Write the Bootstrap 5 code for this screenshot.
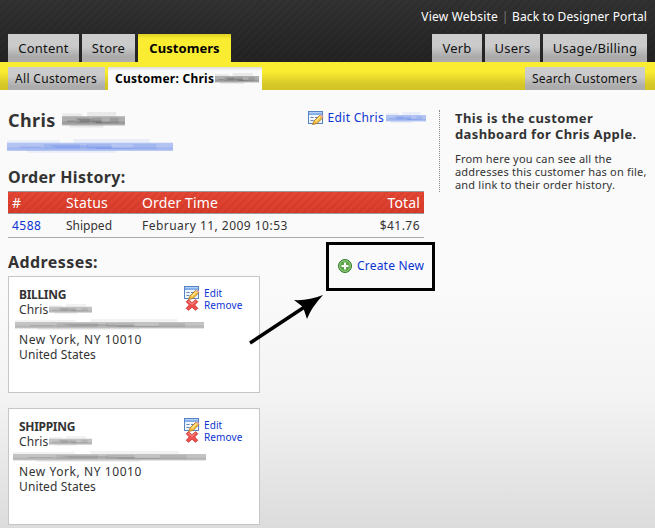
<!DOCTYPE html>
<html lang="en">
<head>
<meta charset="utf-8">
<meta name="viewport" content="width=device-width, initial-scale=1">
<title>Customer dashboard</title>
<link href="https://cdn.jsdelivr.net/npm/bootstrap@5.3.0/dist/css/bootstrap.min.css" rel="stylesheet">
<style>
body{font-family:"Noto Sans","Open Sans",sans-serif;font-size:12px;line-height:15px;color:#333;height:528px;overflow:hidden;letter-spacing:.12px;
 background:linear-gradient(#fafafa 0,#fafafa 290px,#f3f3f3 400px,#dcdcdc 528px)}
a{color:#0b35d2;text-decoration:none}
h1,h2,h3{font-weight:700;color:#333;margin:0}
.masthead{height:62px;padding:0 8px;background:repeating-linear-gradient(135deg,rgba(0,0,0,.1) 0,rgba(0,0,0,.02) 2px 3.600px,rgba(0,0,0,.1) 5.600px),linear-gradient(#333,#242424)}
.toplinks{height:34px;padding-bottom:2px;color:#777}
.toplinks a{color:#fff}
.toplinks #view{letter-spacing:.2px}
.sep{width:14px;text-align:center}
.tab{height:28px;font-size:13px;color:#111;background:linear-gradient(#cdcdcd 0,#cacaca 45%,#ababab 80%,#acacac);display:flex;align-items:center;justify-content:center;white-space:nowrap;letter-spacing:.25px}
.tab.current{background:linear-gradient(#ded021,#faec31 5px);font-weight:700;color:#000;letter-spacing:.05px}
.subbar{height:28px;padding:5px 10px 0 8px;background:linear-gradient(#faec31 0,#faec31 35%,#d5c727 80%,#d3c526)}
.subtab{height:23px;font-size:12px;color:#111;background:linear-gradient(#cdcdcd 0,#cacaca 40%,#acacac 85%);display:flex;align-items:center;white-space:nowrap;padding:0 7px;letter-spacing:.2px}
.subtab.w-all{letter-spacing:.32px}
.subtab.current{background:linear-gradient(#ddd,#fafafa 4px);font-weight:700;color:#000;letter-spacing:.25px}
.g3{gap:3px}
.w-content{width:71px}.w-store{width:53px}.w-cust{width:93px}.w-verb{width:50px}.w-users{width:55px}.w-usage{width:104px}
.w-all{width:97px}.w-one{width:154px}.w-search{width:120px}
.main{width:416px;margin-left:8px}
.title{font-size:18px;line-height:24px;letter-spacing:.4px;padding-top:2px}
.section{font-size:16px;line-height:20px;letter-spacing:.3px}
.mailrow{margin-top:7px}
.history-title{margin-top:13px}
.addr-title{margin-top:14px;letter-spacing:.42px}
.orders{table-layout:fixed;width:416px;margin:4px 0 0;border-collapse:separate;border-spacing:0}
.orders th{height:23px;padding:0 4px;font-size:14px;line-height:20px;font-weight:400;color:#fff;border-top:1px solid #999;border-bottom:1px solid #999}
.orders thead{background:repeating-linear-gradient(135deg,rgba(120,20,10,.13) 0,transparent 2px 3.600px,rgba(120,20,10,.13) 5.600px),linear-gradient(#e64735,#d93c2b)}
.orders td{height:24px;padding:0 4px;border-bottom:1px solid #aaa;letter-spacing:.47px}
.orders td.plain{letter-spacing:0}
.addrhead{height:38px}
.editlink{padding-top:4px;letter-spacing:.3px;margin-right:-2px}
.addr{width:252px;height:117px;border:1px solid #c6c6c6;background:#fff;padding:10px 10px 0;position:relative}
.addr + .addr{margin-top:15px}
.addr strong{letter-spacing:-.3px}
.zip{letter-spacing:.57px}
.line{height:15px}
.acts{position:absolute;left:175px;top:10px;font-size:10px;line-height:12px;letter-spacing:.1px}
.acts a{display:flex;align-items:center;height:12px;gap:4px}
.acts svg{flex:none;overflow:visible}
.smudge{display:inline-block;flex:none;height:12px;color:#555}
.smudge svg{display:block;width:100%;height:100%;filter:blur(.6px)}
.smudge.ink{color:#222}
.smudge.blue{color:#3560e0}
.s-tab{width:44px;margin-left:1px}.s-name{width:63px;height:17px;margin-left:6px}.s-mail{width:166px;height:15px;margin-left:-1px}.s-edit{width:40px;margin-left:2px}.s-first{width:43px;height:11px;margin-left:1px}.s-street{width:189px;height:12px;margin-left:-4px}
.s-street-wide{width:193px;height:12px;margin-left:-6px}
.create{width:109px;height:49px;border:3px solid #000;margin:4px -11px 0 0;padding:0 7px 2px 9px;letter-spacing:.2px}
.create svg{margin-right:5px}
.aside-note{width:216px;height:82px;margin-top:20px;margin-left:15px;padding-left:15px;border-left:1px dotted #888;white-space:nowrap}
.aside-note h3{font-size:13px;line-height:16px;letter-spacing:.38px}
.aside-note p{font-size:11px;line-height:13px;margin:10px 0 0;letter-spacing:.19px}
.pointer{position:absolute;left:248px;top:292px}
</style>
</head>
<body>
<svg class="d-none" xmlns="http://www.w3.org/2000/svg">
 <symbol id="form" viewBox="0 0 16 14"><rect x=".5" y=".5" width="14" height="12" fill="#eef5ff" stroke="#5683c5"/><path d="M1 1h13v3H1z" fill="#86b1ea"/><path d="M1 1.5h13" stroke="#b4d0f5"/><path d="M2.500 6.500h3M2.500 9.500h3M7 6.500h3M7 9.500h2" stroke="#6681b0"/><path d="M4.500 13.500 6 10l6-6 3 2.500-6 6z" fill="#f3bd38" stroke="#a76c27" stroke-width=".8"/><path d="m7.500 10.500 5-5" stroke="#ffe992" stroke-width="1.300"/><path d="m11.500 4.500 1.500-1 2.200 2-1.200 1.500z" fill="#e8a99b"/></symbol>
 <symbol id="cross" viewBox="0 0 13 12"><path d="M3 .7 6.500 3.800 10 .7l2.300 2L9.200 6l3.100 3.300-2.300 2-3.500-3.100L3 11.300.7 9.300 3.800 6 .7 2.700z" fill="#ee5150" stroke="#c92e2e" stroke-width=".8"/><path d="m2.700 2 3.800 3.300L10 2" fill="none" stroke="#ff9d96"/></symbol>
 <symbol id="plus" viewBox="0 0 14 14"><circle cx="7" cy="7" r="6.500" fill="#5ba548" stroke="#2f7a2c"/><circle cx="7" cy="7" r="5.400" fill="none" stroke="#a8d592" stroke-width=".8"/><path d="M7 3.500v7M3.500 7h7" stroke="#fff" stroke-width="2"/></symbol>
 <symbol id="smear" viewBox="0 0 100 12" preserveAspectRatio="none"><g fill="currentColor"><path d="M0 1h32v2h8V0h46v3h14v6H66v2H12V9H0z" opacity=".08"/><path d="M0 3h100v6.500H0z" opacity=".3"/><path d="M22 4h22v4H22zM48 4h15v4H48zM76 4h14v4H76z" opacity=".12"/><path d="M0 6.500h100v2H0z" opacity=".12"/><path d="M25 5h24v1h14v1H30zM8 6h13v1H8zM54 7h22v1H54z" opacity=".2"/></g></symbol>
</svg>
<header>
 <div class="masthead">
  <div class="toplinks d-flex justify-content-end align-items-center"><a href="#" id="view">View Website</a><span class="sep">|</span><a href="#">Back to Designer Portal</a></div>
  <nav class="d-flex justify-content-between">
   <div class="d-flex g3"><a href="#" class="tab w-content"><span>Content</span></a><a href="#" class="tab w-store"><span>Store</span></a><a href="#" class="tab current w-cust"><span>Customers</span></a></div>
   <div class="d-flex g3"><a href="#" class="tab w-verb"><span>Verb</span></a><a href="#" class="tab w-users"><span>Users</span></a><a href="#" class="tab w-usage"><span>Usage/Billing</span></a></div>
  </nav>
 </div>
 <nav class="subbar d-flex justify-content-between">
  <div class="d-flex g3"><a href="#" class="subtab w-all"><span>All Customers</span></a><a href="#" class="subtab current w-one"><span>Customer: Chris</span><i class="smudge ink s-tab"><svg><use href="#smear"/></svg></i></a></div>
  <a href="#" class="subtab w-search"><span>Search Customers</span></a>
 </nav>
</header>
<div class="d-flex">
 <main class="main flex-shrink-0">
  <div class="d-flex justify-content-between align-items-start pt-3">
   <div>
    <h1 class="title d-flex align-items-center"><span>Chris</span><i class="smudge ink s-name"><svg><use href="#smear"/></svg></i></h1>
    <div class="mailrow d-flex"><i class="smudge blue s-mail"><svg><use href="#smear"/></svg></i></div>
   </div>
   <a href="#" class="editlink d-flex align-items-center"><svg width="16" height="14" class="me-1"><use href="#form"/></svg><span>Edit Chris</span><i class="smudge blue s-edit"><svg><use href="#smear"/></svg></i></a>
  </div>
  <h2 class="section history-title">Order History:</h2>
  <table class="orders">
   <colgroup><col width="54"><col width="76"><col width="186"><col width="100"></colgroup>
   <thead><tr><th>#</th><th>Status</th><th>Order Time</th><th class="text-end">Total</th></tr></thead>
   <tbody><tr><td><a href="#">4588</a></td><td class="plain">Shipped</td><td>February 11, 2009 10:53</td><td class="text-end">$41.76</td></tr></tbody>
  </table>
  <div class="addrhead d-flex justify-content-between align-items-start">
   <h2 class="section addr-title">Addresses:</h2>
   <a href="#" class="create d-flex align-items-center"><svg width="14" height="14"><use href="#plus"/></svg><span>Create New</span></a>
  </div>
  <section class="addr">
   <strong>BILLING</strong>
   <div class="line d-flex align-items-center"><span>Chris</span><i class="smudge s-first"><svg><use href="#smear"/></svg></i></div>
   <div class="line d-flex align-items-center"><i class="smudge s-street"><svg><use href="#smear"/></svg></i></div>
   <div class="zip">New York, NY 10010</div><div>United States</div>
   <div class="acts"><a href="#"><svg width="16" height="14"><use href="#form"/></svg><span>Edit</span></a><a href="#"><svg width="16" height="12"><use href="#cross"/></svg><span>Remove</span></a></div>
  </section>
  <section class="addr">
   <strong>SHIPPING</strong>
   <div class="line d-flex align-items-center"><span>Chris</span><i class="smudge s-first"><svg><use href="#smear"/></svg></i></div>
   <div class="line d-flex align-items-center"><i class="smudge s-street-wide"><svg><use href="#smear"/></svg></i></div>
   <div class="zip">New York, NY 10010</div><div>United States</div>
   <div class="acts"><a href="#"><svg width="16" height="14"><use href="#form"/></svg><span>Edit</span></a><a href="#"><svg width="16" height="12"><use href="#cross"/></svg><span>Remove</span></a></div>
  </section>
 </main>
 <aside class="aside-note"><h3>This is the customer<br>dashboard for Chris Apple.</h3><p>From here you can see all the<br>addresses this customer has on file,<br>and link to their order history.</p></aside>
</div>
<svg class="pointer" width="78" height="54"><path d="M2 51 58 14" stroke="#000" stroke-width="3.500"/><path d="M75 3Q60 9 46 8l9 7 4 12Q63 16 75 3z"/></svg>
<script src="https://cdn.jsdelivr.net/npm/bootstrap@5.3.0/dist/js/bootstrap.bundle.min.js"></script>
</body>
</html>
